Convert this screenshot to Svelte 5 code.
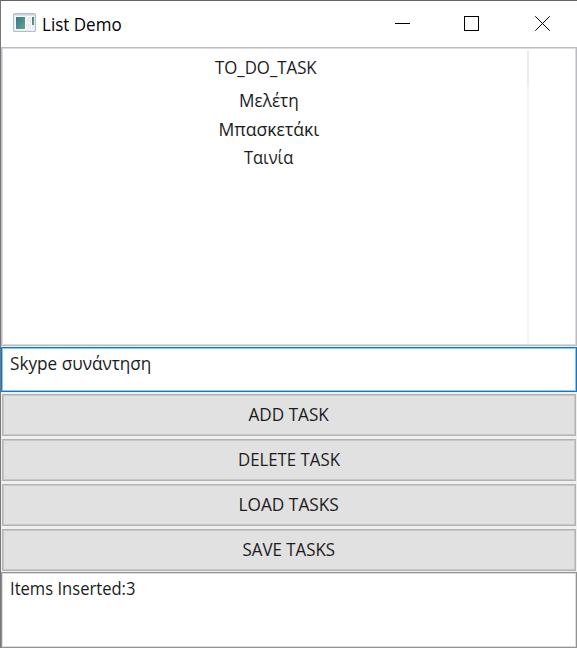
<script>
  const tasks = [
    { text: 'Μελέτη', width: 60 },
    { text: 'Μπασκετάκι', width: 101 },
    { text: 'Ταινία', width: 49 }
  ];
  const actions = [
    { text: 'ADD TASK', width: 80 },
    { text: 'DELETE TASK', width: 102 },
    { text: 'LOAD TASKS', width: 100 },
    { text: 'SAVE TASKS', width: 93 }
  ];

  // Condenses a label horizontally so that it takes the given width.
  function fit(node, width) {
    const apply = () => {
      node.style.transform = `scaleX(${width / node.offsetWidth})`;
    };
    apply();
    document.fonts?.ready.then(apply);
  }
</script>

<div class="window">
  <header>
    <svg class="app-icon" width="23" height="19" viewBox="0 0 23 19">
      <defs>
        <linearGradient id="pane" x1="0" y1="0" x2="1" y2="1">
          <stop offset="0" stop-color="#3b7199" />
          <stop offset="1" stop-color="#59ad7c" />
        </linearGradient>
      </defs>
      <rect x=".6" y=".6" width="21.8" height="17.8" rx="1" fill="#f7f8fa" stroke="#b4bdc8" stroke-width="1.2" />
      <path d="M1.2 1.8H21.8" stroke="#c6ced9" stroke-width="1.4" />
      <rect x="3" y="4" width="9" height="12" fill="url(#pane)" />
      <rect x="13.5" y="4" width="4.5" height="5.5" fill="#ececed" />
      <rect x="13.5" y="10.5" width="4.5" height="5.5" fill="#ececed" />
      <rect x="19" y="4" width="2" height="8" fill="url(#pane)" />
      <rect x="19" y="12" width="2" height="4" fill="#ececed" />
    </svg>
    <h1><span use:fit={80}>List Demo</span></h1>
    <svg class="controls" width="157" height="15" viewBox="0 0 157 15" fill="none" stroke="#000" stroke-width="1">
      <path d="M0 7.5H15" />
      <rect x="69.5" y=".5" width="14" height="14" />
      <path d="M140.3 .3L154.7 14.7M154.7 .3L140.3 14.7" />
    </svg>
  </header>

  <section class="table">
    <div class="column">
      <div class="head"><span use:fit={102}>TO_DO_TASK</span></div>
      <ul>
        {#each tasks as task}
          <li><span use:fit={task.width}>{task.text}</span></li>
        {/each}
      </ul>
    </div>
  </section>

  <div class="entry"><span class="left" use:fit={141}>Skype συνάντηση</span></div>

  <div class="buttons">
    {#each actions as action}
      <button><span use:fit={action.width}>{action.text}</span></button>
    {/each}
  </div>

  <div class="status"><span class="left" use:fit={125}>Items Inserted:3</span></div>
</div>

<style>
  .window {
    box-sizing: border-box;
    width: 577px;
    height: 648px;
    display: flex;
    flex-direction: column;
    border-top: 1px solid #646464;
    border-left: 1px solid #777;
    background: #f0f0f0;
    color: #1c1c1c;
    font: 17.8px/28px "Open Sans", "Noto Sans", sans-serif;
    overflow: hidden;
  }
  span {
    display: inline-block;
    white-space: nowrap;
  }
  .left {
    transform-origin: left;
  }
  header {
    height: 46px;
    flex: none;
    display: flex;
    align-items: flex-start;
    background: #fff;
  }
  .app-icon {
    margin: 12px 0 0 12px;
  }
  h1 {
    width: 80px;
    margin: 9px 0 0 6px;
    color: #000;
    font-size: 18.5px;
    font-weight: 400;
    line-height: 28px;
  }
  h1 span {
    transform-origin: left;
  }
  .controls {
    margin: 15px 25px 0 auto;
  }
  .table {
    box-sizing: border-box;
    height: 299px;
    flex: none;
    border: 1px solid #bcbcc0;
    box-shadow: inset 0 0 0 1px #dadae0;
    background: #fff;
    padding: 2px 0 1px 1px;
  }
  .column {
    width: 526px;
    height: 100%;
    display: flex;
    flex-direction: column;
  }
  .head {
    height: 36px;
    box-sizing: border-box;
    padding: 3px 0 0 2px;
    border-right: 2px solid #ebebeb;
    text-align: center;
  }
  ul {
    flex: 1;
    margin: 0;
    padding: 0;
    border-right: 2px solid #edf6fd;
    list-style: none;
    text-align: center;
  }
  li {
    height: 28.5px;
    padding-left: 7px;
  }
  .entry {
    box-sizing: border-box;
    height: 45px;
    flex: none;
    margin-top: 1px;
    border: 1px solid #0f78c8;
    box-shadow: inset 0 0 0 1px #8fc6ee;
    background: #fff;
    padding: 1px 8px;
  }
  .buttons {
    display: flex;
    flex-direction: column;
    gap: 3px;
    padding: 2px 1px 1px;
  }
  button {
    box-sizing: border-box;
    height: 42px;
    padding: 0 0 3px;
    border: 1px solid #b2b2b2;
    border-radius: 0;
    box-shadow: inset 0 0 0 1px #c8c8c8;
    background: #e1e1e1;
    color: inherit;
    font: inherit;
  }
  .status {
    box-sizing: border-box;
    height: 76px;
    flex: none;
    border: 1px solid #929292;
    box-shadow: inset 0 0 0 1px #dcdcdc;
    background: #fff;
    padding: 1px 8px;
  }
</style>
